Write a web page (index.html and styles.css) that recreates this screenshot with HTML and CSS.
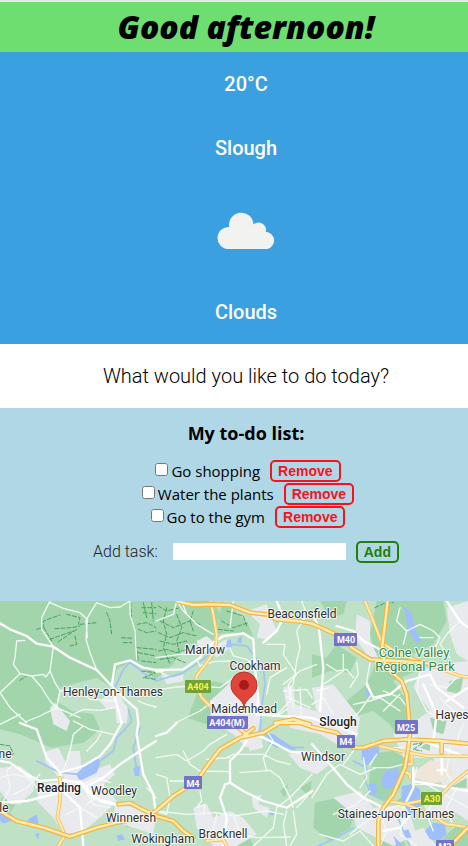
FILE: index.html
```html
<!DOCTYPE html>
<html lang="en">
<head>
<meta charset="utf-8">
<meta name="viewport" content="width=device-width, initial-scale=1">
<title>Good afternoon!</title>
<link rel="stylesheet" href="styles.css">
</head>
<body>
<header class="greeting"><h1>Good afternoon!</h1></header>
<main>
<section class="weather">
  <p>20°C</p>
  <p>Slough</p>
  <svg class="cloud" viewBox="0 0 60 60" aria-hidden="true">
    <path d="M11.8 49A11 11 0 0 1 13.2 27A12.2 12.2 0 1 1 37.4 24.4A7.6 7.6 0 0 1 49.8 31.7A8.8 8.8 0 0 1 51.5 49Z"/>
  </svg>
  <p>Clouds</p>
</section>
<section class="question"><p>What would you like to do today?</p></section>
<section class="todo">
  <h2>My to-do list:</h2>
  <ul>
    <li><input type="checkbox" id="t1"><label for="t1">Go shopping</label><button type="button" class="btn remove">Remove</button></li>
    <li><input type="checkbox" id="t2"><label for="t2">Water the plants</label><button type="button" class="btn remove">Remove</button></li>
    <li><input type="checkbox" id="t3"><label for="t3">Go to the gym</label><button type="button" class="btn remove">Remove</button></li>
  </ul>
  <form class="add-task">
    <label for="task">Add task:</label>
    <input type="text" id="task">
    <button type="button" class="btn add">Add</button>
  </form>
</section>
<section class="map">
<svg viewBox="0 0 468 245" preserveAspectRatio="xMidYMid slice">
  <g transform="scale(.33333)">
    <!-- woodland -->
    <g class="wood">
      <path d="M0 0H640L660 40 640 120 560 130 520 190 468 235 430 205 395 180 350 205 335 260 290 230 180 260 170 300 215 330 280 340 300 385 250 425 155 440 60 400 0 385Z"/>
      <path d="M665 0 700 25 745 70 760 110 700 95 650 100Z"/>
      <path d="M1130 0H1330L1340 60 1300 130 1240 160 1250 210 1180 240 1220 300 1230 360 1200 420 1170 370 1120 330 1050 350 1040 300 1100 250 1130 180 1110 100Z"/>
      <path d="M960 0 1040 0 1030 40 990 50Z"/>
      <path d="M936 160 980 170 1010 130 1070 170 1050 215 990 210 936 230Z"/>
      <path d="M1110 510 1130 455 1180 450 1230 480 1200 560 1150 600 1105 580Z"/>
      <path d="M945 605 1010 590 1070 625 1050 680 990 720 940 680Z"/>
      <path d="M1190 600 1240 560 1280 600 1230 640Z"/>
      <path d="M560 300 640 240 700 255 640 305 620 370 560 350Z"/>
      <path d="M0 600 40 560 60 590 20 650 0 655Z"/>
      <path d="M360 620 400 600 420 650 380 680Z"/>
      <path d="M840 570 865 550 855 590Z"/>
      <path d="M900 560 935 540 930 590Z"/>
      <path d="M690 685 735 675 760 735H690Z"/>
      <path d="M1130 690 1200 660 1215 735H1140Z"/>
      <path d="M1310 735 1370 670 1404 690V735Z"/>
    </g>
    <path class="lightland" d="M350 330 345 260 390 190 430 215 468 245 560 200 590 280 560 360 440 350Z"/>
    <!-- built-up areas -->
    <g class="urban">
      <path d="M300 300 345 260 385 325 380 366 350 366 345 320 320 325Z"/>
      <path d="M590 120 620 105 650 130 680 115 690 140 650 170 625 150 600 150Z"/>
      <path d="M740 30 800 10 830 90 805 115 770 110 780 70Z"/>
      <path d="M630 300 690 245 770 260 790 340 770 400 740 440 700 400 635 360Z"/>
      <path d="M850 260 880 250 885 310 945 330 1040 350 1070 410 1020 435 960 400 870 380Z"/>
      <path d="M1260 210 1320 190 1404 180V620L1360 610 1330 560 1300 470 1210 470 1180 400 1230 370 1290 330 1240 260Z"/>
      <path d="M1340 20 1404 0V180L1370 160 1350 100Z"/>
      <path d="M1070 40 1110 60 1110 120 1140 180 1100 160 1065 110Z"/>
      <path d="M936 260 1000 250 1080 350 1070 410 960 390Z"/>
      <path d="M140 450 175 440 210 510 180 535 135 480Z"/>
      <path d="M0 500 60 495 105 530 100 570 60 610 30 610 0 570Z"/>
      <path d="M205 450 240 450 245 510 300 500 330 490 345 520 310 550 350 600 300 650 250 690 190 700 160 650 110 600 120 550 190 540Z"/>
      <path d="M345 610 430 620 468 640 460 700 400 680 340 660Z"/>
      <path d="M580 620 620 610 640 650 690 630 730 650 770 700 710 735H640L590 680Z"/>
      <path d="M755 590 785 580 775 610 810 620 800 650 760 620Z"/>
      <path d="M865 460 910 450 936 460 990 490 950 520 900 500Z"/>
      <path d="M1000 590 1080 570 1120 620 1220 610 1250 700 1180 735 1070 680 1060 640Z"/>
      <path d="M1260 590 1380 560 1404 610V660L1360 630 1290 650Z"/>
      <path d="M1220 700 1270 680 1310 735H1230Z"/>
      <path d="M480 210 520 230 550 220 550 240 500 250Z"/>
      <path d="M735 415 780 390 790 440 750 450Z"/>
      <path d="M150 320 165 305 210 360 200 390 160 370Z"/>
    </g>
    <path class="airport" d="M1240 515 1290 478 1345 485 1360 515 1340 540 1290 548 1245 530Z"/>
    <path class="wood" d="M1290 350 1340 360 1330 400 1300 390ZM1350 240 1390 230 1380 280 1340 270ZM1260 440 1290 420 1290 450ZM1350 560 1400 530V560Z"/>
    <!-- water -->
    <g class="water">
      <path d="M1210 15 1235 35 1250 95 1265 115 1250 130 1225 90Z"/>
      <path d="M1085 445 1140 435 1135 460 1100 495 1085 475Z"/>
      <path d="M1155 510 1190 500 1200 520 1180 560 1150 565 1145 535Z"/>
      <path d="M1205 555 1235 550 1260 565 1260 620 1230 640 1205 600Z"/>
      <path d="M1275 690 1300 665 1335 670 1340 700 1320 720 1290 715Z"/>
      <path d="M1105 550 1130 545 1130 580 1110 582Z"/>
      <path d="M228 520 270 480 295 470 300 490 290 515 240 540Z"/>
      <path d="M0 638 30 635 45 655 10 668 0 660ZM85 655 110 640 115 665 100 680 80 670ZM105 700 118 695 115 715Z"/>
      <path d="M680 120 692 115 696 138 680 140ZM714 112 726 105 725 125 712 125Z"/>
      <path d="M800 395 820 400 865 430 890 445 880 448 840 435 830 440 805 425Z"/>
      <path d="M400 500 420 495 418 525 405 525ZM350 705 365 700 375 715 355 720ZM810 634 820 632 822 642 808 642Z"/>
      <path d="M1210 690 1225 685 1235 710 1220 710ZM1095 265 1110 260 1110 285 1100 290ZM1180 705 1210 735H1190Z"/>
    </g>
    <path class="river" d="M345 260 370 205 390 183 430 215 468 240 550 215 610 175 640 145 700 130 740 135 768 170 790 200 795 250 785 320 780 390 820 420 865 438 910 440 M385 325 395 360 375 385 350 410 340 450 300 480 240 520 180 515 110 480 M1060 480 1100 500 1095 540 1115 580 1160 600 1210 610 M1190 640 1210 690 1230 735 M955 735 1010 710 1060 680 M420 380 400 440 410 510"/>
    <!-- footpaths -->
    <path class="trail" d="M110 85 130 80 130 60 180 42 M132 80 155 120 M165 83 215 80 240 75 M240 70 290 65 M200 40 240 50 235 70 M150 115 220 90 M175 122 230 85 M225 105 230 130 210 135 M320 35 330 60 335 100 M365 110 400 112 M370 125 395 125 M60 238 78 226 M392 5 395 60 405 90 408 130 415 180 M425 20 468 20 M430 35 468 38 M412 70 440 65 468 80 M415 85 440 95 468 90 M412 140 468 145 M415 155 468 165 M425 180 468 185 M425 210 468 215 430 230 468 235 M430 5 440 50 M455 5 460 60 M475 15 500 30 540 20 M480 60 520 80 570 60 600 70 M475 95 510 110 550 95 590 105 M480 120 520 130 560 120 M475 150 500 145 530 155 560 145 M480 175 520 170 555 185 M500 20 490 60 500 100 490 140 510 190 M530 40 545 80 530 120 540 160 M580 30 570 60 580 90 M680 30 730 45 740 75 M665 60 700 80 745 65 M655 85 700 90 M1125 20 1150 8 1180 5 M1240 430 1270 425 1240 445 1265 450 M1160 595 1180 605 M0 430 30 435 40 460 20 470"/>
    <!-- minor roads -->
    <g class="minor">
      <path d="M150 0 125 50 125 85 160 137 150 210 165 245 180 270 170 320 M150 5 190 22 240 35 262 55 M262 110 258 60 268 40 290 5 330 20 360 18 390 0 M262 60 258 115 270 155 290 207 M390 0 390 40 405 90 410 175 M75 118 50 120 45 170 40 190 60 218 0 275 M60 218 95 225 130 220 138 228 150 210 M95 225 125 260 150 300 170 320 240 350 M180 270 230 262 270 295 345 300 M170 320 120 345 75 363 M0 275 30 320 80 365 M210 345 250 325 300 328 345 320 M415 300 440 310 468 318"/>
      <path d="M480 265 530 258 580 255 600 270 M468 170 540 160 600 160 620 135 M590 175 600 195 640 182 690 180 M595 255 660 260 700 230 M530 0 550 30 590 70 640 100 M700 0 690 80 M545 0 560 40 M468 60 520 40 530 0 M525 366 600 330 640 300 M690 140 700 165 740 175 770 200 M832 340 870 300 865 250 890 220 850 160 855 130 800 130 M905 0 920 40 890 90 900 140 890 180 880 250 M850 250 900 210 950 190 M860 200 810 230 800 280 M770 340 830 345 860 325 M850 270 920 265 936 290 M856 285 930 320 M870 260 880 320 M900 260 905 360 M936 310 970 290 1000 340 M950 270 990 260"/>
      <path d="M1110 185 1100 240 1115 280 1080 330 1060 350 M1030 160 1030 210 970 250 M980 190 1010 210 1040 205 1060 230 M1070 185 1075 220 1050 260 M1210 130 1220 90 1190 60 1200 20 M1220 90 1260 70 1300 90 1320 110 1300 150 M1260 110 1300 110 M1380 60 1340 100 1320 130 1350 170 M1260 210 1250 270 1280 330 1330 360 M1290 250 1340 260 1380 220 M1320 290 1370 340 M1150 270 1200 290 1230 330 M1200 280 1150 330 M1060 310 1110 300 1140 290 1200 330"/>
      <path d="M0 370 60 340 M220 360 270 385 340 400 M305 390 290 420 260 450 M210 450 220 400 250 375 M0 530 40 520 90 530 110 560 M10 600 30 560 20 510 40 490 M40 580 80 560 120 520 M60 500 90 540 M190 540 250 550 290 530 330 545 M200 640 240 620 290 650 M250 560 280 610 330 620 M310 550 290 590 260 610 M210 450 190 510 M440 560 468 590"/>
      <path d="M468 470 530 460 560 480 610 450 630 430 680 400 M550 450 570 490 600 510 690 512 M468 520 500 530 510 590 500 640 468 630 M510 540 600 540 M600 570 605 600 590 620 615 610 610 640 M690 470 620 475 680 470 700 460 790 460 830 480 870 490 M720 515 810 508 840 530 870 590 880 620 M800 390 820 420 790 470 800 510 M468 630 560 640 650 635 700 645 800 630 850 640 M870 590 830 620 820 680 760 735 M870 590 936 520 M860 630 850 670 860 735 M880 630 890 700 870 735 M700 640 720 700 770 710 870 708 M650 640 640 690 620 720 M936 570 890 620"/>
      <path d="M936 590 980 520 1020 490 1080 520 1130 500 M1060 450 1030 490 M1090 470 1100 530 1080 560 M1120 500 1170 500 1210 490 M1130 460 1110 490 M1000 640 1070 610 1110 570 M1050 700 1100 660 1140 630 1210 610 M960 700 1030 720 1080 690 1120 735 M1210 440 1150 440 1120 420 M1250 500 1240 550 1280 550 1350 590 1404 620 M1300 600 1280 640 1300 690 M1370 560 1340 620 1360 680 M1210 640 1200 700 1250 735 M1140 640 1160 690 1140 735 M1320 430 1330 500 1360 550 M1390 370 1370 420 1404 440 M1350 440 1340 510"/>
    </g>
    <!-- A roads -->
    <g class="major">
      <path d="M0 67 30 85 80 105 110 128 160 137 210 170 290 207 335 255 365 285 410 325 415 366 M335 255 345 190 390 178 430 200 468 207 550 205 600 170 625 135 670 105 730 97 760 115 765 200 775 290 770 340 M345 290 365 366 M468 212 490 210"/>
      <path d="M60 366 110 385 140 470 180 515 250 495 300 465 330 430 365 366 M0 480 30 485 80 520 120 540 180 535 240 545 280 590 350 610 M0 605 80 600 190 572 240 620 250 735 M260 555 310 530 360 490 420 450 468 420 M415 366 410 400 430 520 460 580 468 640 M240 540 300 600 350 612 M180 515 190 570"/>
      <path d="M740 420 720 450 690 480 690 545 675 550 660 590 670 620 680 650 670 735 M690 545 730 570 790 600 860 620 936 570 M770 400 830 430 870 452 936 458 M770 340 840 345 930 350 1000 370 1070 400 M790 125 830 90 850 50 830 0"/>
      <path d="M936 40 956 75 970 200 960 330 M1010 75 1060 90 1090 120 1150 150 M1100 250 1120 290 1170 280 1220 240 M1340 0 1380 60 1404 80 M1240 500 1240 560 1210 620 M936 430 990 490 1040 550 1090 590 1150 620 M1240 540 1404 570 M1220 240 1290 220 1310 260 1390 320 M1270 250 1310 340 1300 420 M1404 260 1340 300 M1240 410 1404 470"/>
      <path d="M468 405 500 395 530 366 M660 366 690 340 M1150 690 1200 680 1230 640 M1325 470V520 M1312 508H1338"/>
    </g>
    <!-- motorways and trunk roads: wide casing below, narrow fill above -->
    <defs>
      <path id="trunks" d="M632 0 640 40 650 100 648 145 620 185 590 225 588 255 605 290 630 315 M180 530 180 600 172 650 195 703 175 735 M1095 0 1120 60 1145 125 1190 155 1280 190 1340 210 1380 225 1404 228 M1140 435 1200 450 1280 465 1404 466 M1160 600 1220 610 1290 640 1340 670 1404 678 M1210 610 1260 600 1320 585 1360 545 1404 510 M620 720 670 715 680 735 M1210 490H1235V455 M1210 510 1230 520V530"/>
      <path id="motorways" d="M530 0 580 12 630 10 690 12 750 35 800 40 830 55 890 60 936 68 1040 115 1055 140 1110 175 1190 180 1270 185 1300 190 M1163 0 1155 70 1145 150 1160 200 1205 240 1220 280 1225 330 1230 400 1225 440 1215 500 1180 580 1150 620 1135 660 1135 735 M0 630 50 660 130 680 210 707 290 680 350 665 430 650 468 630 520 585 590 540 625 490 660 445 720 410 790 395 840 365 900 366 936 378 1010 395 1060 440 1090 440 1150 420 1220 415 1320 420 1404 428 M355 610 390 606 420 622 468 645 520 660 550 690 580 710 M825 366 880 355 930 370 M1325 420V455 M1404 680 1350 735 M740 400 715 380 M730 405 760 382"/>
    </defs>
    <use href="#trunks" class="trunk-edge"/>
    <use href="#trunks" class="trunk-fill"/>
    <use href="#motorways" class="mw-edge"/>
    <use href="#motorways" class="mw-fill"/>
  </g>
  <g class="shields">
    <rect x="334" y="32" width="23" height="13" rx="1"/><text x="346" y="42">M40</text>
    <rect x="207" y="115" width="41" height="13" rx="1"/><text x="227" y="125">A404(M)</text>
    <rect x="395" y="119" width="23" height="14" rx="1"/><text x="406" y="130">M25</text>
    <rect x="337" y="134" width="18" height="13" rx="1"/><text x="346" y="144">M4</text>
    <rect x="184" y="175" width="18" height="13" rx="1"/><text x="193" y="186">M4</text>
    <rect x="436" y="239" width="18" height="13" rx="1"/><text x="445" y="249">M3</text>
  </g>
  <g class="shields green">
    <rect x="185" y="79" width="26" height="13" rx="1"/><text x="198" y="89">A404</text>
    <rect x="421" y="191" width="21" height="13" rx="1"/><text x="432" y="201">A30</text>
  </g>
  <g class="places">
    <text x="302" y="17">Beaconsfield</text>
    <text x="205" y="53">Marlow</text>
    <text x="255" y="69">Cookham</text>
    <text x="113" y="95">Henley-on-Thames</text>
    <text x="244" y="112">Maidenhead</text>
    <text x="323" y="160">Windsor</text>
    <text x="452" y="118">Hayes</text>
    <text x="114" y="194">Woodley</text>
    <text x="131" y="221">Winnersh</text>
    <text x="163" y="242">Wokingham</text>
    <text x="223" y="237">Bracknell</text>
    <text x="396" y="217">Staines-upon-Thames</text>
    <text x="5" y="157">ne</text>
    <text x="4" y="211">le</text>
    <text class="town" x="338" y="125">Slough</text>
    <text class="town" x="59" y="191">Reading</text>
    <text class="park" x="414" y="56">Colne Valley</text>
    <text class="park" x="415" y="70">Regional Park</text>
  </g>
  <path class="pin" d="M244 107C244 97 231 96 231 84A13 13 0 0 1 257 84C257 96 244 97 244 107Z"/>
  <circle class="pin-dot" cx="244" cy="84" r="5"/>
</svg>
</section>
</main>
</body>
</html>
```
FILE: styles.css
```css
* { box-sizing: border-box; }
body {
  margin: 0;
  min-height: 100vh;
  display: flex;
  flex-direction: column;
  font-family: "Open Sans", "Noto Sans", sans-serif;
  font-size: 15px;
  color: #000;
  background: #fff;
}
main { flex: 1; display: flex; flex-direction: column; }
h1, h2, p, ul { margin: 0; padding: 0; }
.greeting, .weather, .question, .todo { padding-left: 24px; text-align: center; }
.greeting { border-top: 2px solid #e6ebe6; background: #6ede70; }
.greeting h1 {
  font-family: "Open Sans", sans-serif;
  font-size: 32px;
  line-height: 50px;
  font-weight: 800;
  font-style: italic;
}
.weather {
  display: flex;
  flex-direction: column;
  align-items: center;
  gap: 40px;
  padding-top: 20px;
  padding-bottom: 20px;
  background: #3aa0df;
  color: #fff;
  font: 500 20px/24px Roboto, sans-serif;
}
.cloud { display: block; width: 60px; height: 60px; fill: #f2f2f1; }
.question { font: 300 20px/64px Roboto, sans-serif; }
.todo { background: #b0d7e5; padding-top: 13px; padding-bottom: 38px; }
.todo h2 { font-size: 18px; line-height: 24px; font-weight: 700; }
.todo ul { list-style: none; margin-top: 14px; }
.todo li { display: flex; justify-content: center; align-items: center; height: 23px; }
.todo li input { width: 13px; height: 13px; margin: 0 3px 2px 4px; }
.todo li .btn { margin-left: 10px; }
.btn {
  height: 22px;
  padding: 0 6px;
  border: 2px solid currentColor;
  border-radius: 5px;
  background: transparent;
  font: 700 14px/18px "Liberation Sans", sans-serif;
}
.remove { color: #f6131e; }
.add { color: #218003; }
.add-task { display: flex; justify-content: center; align-items: center; margin-top: 12px; height: 23px; }
.add-task label { font: 300 16px/20px Roboto, sans-serif; color: #222; margin-right: 15px; }
.add-task input { width: 173px; height: 17px; margin-right: 10px; padding: 0 2px; border: 0; background: #fff; }

.map { flex: 1; min-height: 240px; display: flex; background: #bfe1c5; overflow: hidden; }
.map svg { display: block; width: 100%; flex: 1; }
.wood { fill: #a3d5ac; }
.lightland { fill: #bfe1c5; }
.urban { fill: #e8eaed; }
.airport { fill: #eee7d9; }
.water { fill: #9fbffb; }
.river, .trail, .minor, .major, .mw-edge, .mw-fill, .trunk-edge, .trunk-fill { fill: none; stroke-linecap: round; stroke-linejoin: round; }
.river { stroke: #a0c4f5; stroke-width: 5; }
.trail { stroke: #45a35a; stroke-width: 3; stroke-dasharray: 12 6; }
.minor { stroke: #f3f9f4; stroke-width: 4; }
.major { stroke: #fff; stroke-width: 7; }
.trunk-edge { stroke: #f4bf58; stroke-width: 11; }
.trunk-fill { stroke: #fdebb0; stroke-width: 6; }
.mw-edge { stroke: #f4b43d; stroke-width: 14; }
.mw-fill { stroke: #fdebb0; stroke-width: 7; }
.pin { fill: #e0443a; stroke: #b5322a; stroke-width: 1; }
.pin-dot { fill: #a91b19; }
.shields rect { fill: #7272c8; }
.shields text { fill: #fff; font: 700 9px Roboto, sans-serif; text-anchor: middle; }
.green rect { fill: #71a238; }
.green text { fill: #fff04a; }
.places text {
  font: 400 12px Roboto, sans-serif;
  fill: #2d3033;
  text-anchor: middle;
  stroke: #fff;
  stroke-width: 2px;
  stroke-opacity: .8;
  stroke-linejoin: round;
  paint-order: stroke;
}
.places .town { font-weight: 500; fill: #202124; }
.places .park { font-size: 13px; fill: #348a4e; }
```
